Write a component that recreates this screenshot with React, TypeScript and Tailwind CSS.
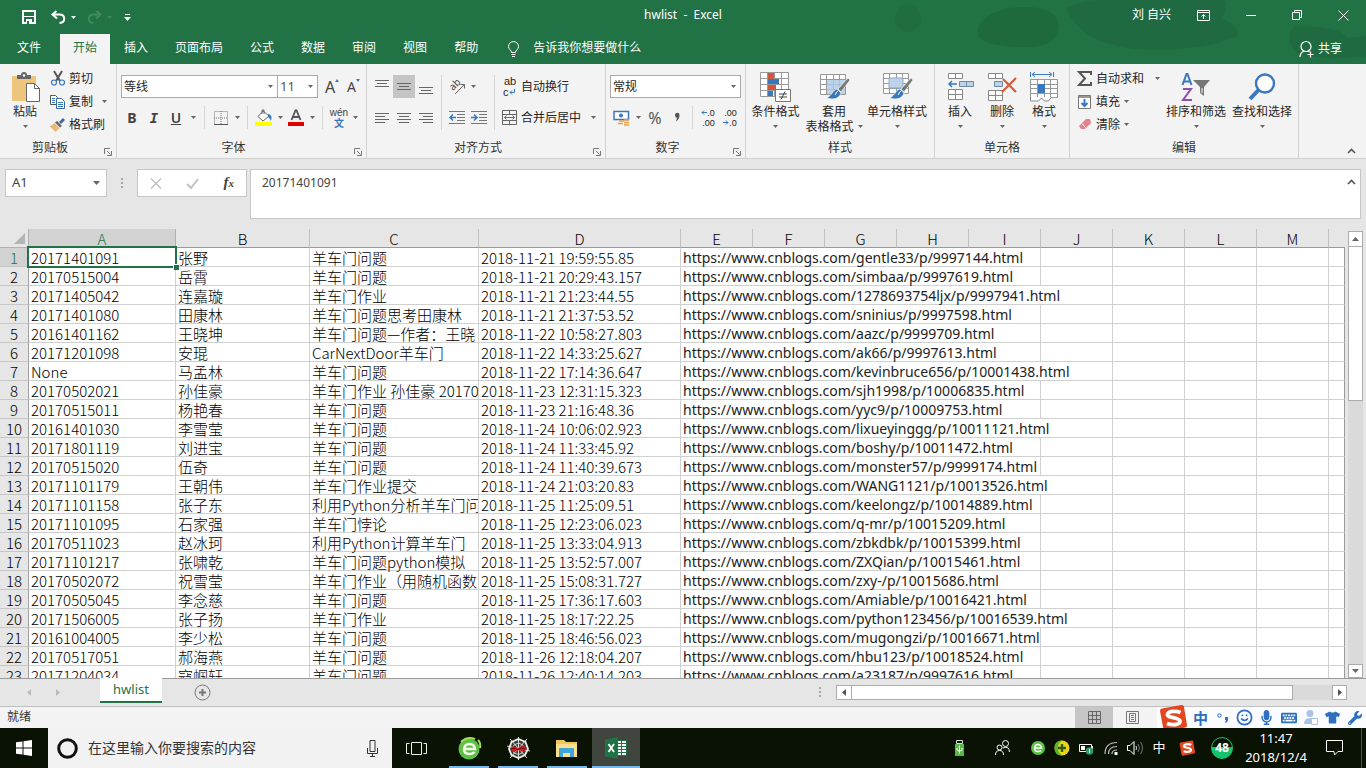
import { useState } from "react";
import type { ReactNode } from "react";
import { FaKeyboard, FaMicrophone, FaTshirt, FaWrench } from "react-icons/fa";
import { Smile } from "lucide-react";

type Row = {
  id: string;
  name: string;
  title: string;
  time: string;
  path: string;
  span: number;
};

// span = how many columns the link text runs over
const rows: Row[] = [
  { id: "20171401091", name: "张野", title: "羊车门问题", time: "2018-11-21 19:59:55.85", path: "gentle33/p/9997144", span: 5 },
  { id: "20170515004", name: "岳霄", title: "羊车门问题", time: "2018-11-21 20:29:43.157", path: "simbaa/p/9997619", span: 5 },
  { id: "20171405042", name: "连嘉璇", title: "羊车门作业", time: "2018-11-21 21:23:44.55", path: "1278693754ljx/p/9997941", span: 6 },
  { id: "20171401080", name: "田康林", title: "羊车门问题思考田康林", time: "2018-11-21 21:37:53.52", path: "sninius/p/9997598", span: 5 },
  { id: "20161401162", name: "王晓坤", title: "羊车门问题—作者：王晓", time: "2018-11-22 10:58:27.803", path: "aazc/p/9999709", span: 5 },
  { id: "20171201098", name: "安琨", title: "CarNextDoor羊车门", time: "2018-11-22 14:33:25.627", path: "ak66/p/9997613", span: 5 },
  { id: "None", name: "马孟林", title: "羊车门问题", time: "2018-11-22 17:14:36.647", path: "kevinbruce656/p/10001438", span: 6 },
  { id: "20170502021", name: "孙佳豪", title: "羊车门作业 孙佳豪 20170", time: "2018-11-23 12:31:15.323", path: "sjh1998/p/10006835", span: 5 },
  { id: "20170515011", name: "杨艳春", title: "羊车门问题", time: "2018-11-23 21:16:48.36", path: "yyc9/p/10009753", span: 5 },
  { id: "20161401030", name: "李雪莹", title: "羊车门问题", time: "2018-11-24 10:06:02.923", path: "lixueyinggg/p/10011121", span: 6 },
  { id: "20171801119", name: "刘进宝", title: "羊车门问题", time: "2018-11-24 11:33:45.92", path: "boshy/p/10011472", span: 5 },
  { id: "20170515020", name: "伍奇", title: "羊车门问题", time: "2018-11-24 11:40:39.673", path: "monster57/p/9999174", span: 5 },
  { id: "20171101179", name: "王朝伟", title: "羊车门作业提交", time: "2018-11-24 21:03:20.83", path: "WANG1121/p/10013526", span: 6 },
  { id: "20171101158", name: "张子东", title: "利用Python分析羊车门问", time: "2018-11-25 11:25:09.51", path: "keelongz/p/10014889", span: 5 },
  { id: "20171101095", name: "石家强", title: "羊车门悖论", time: "2018-11-25 12:23:06.023", path: "q-mr/p/10015209", span: 5 },
  { id: "20170511023", name: "赵冰珂", title: "利用Python计算羊车门", time: "2018-11-25 13:33:04.913", path: "zbkdbk/p/10015399", span: 5 },
  { id: "20171101217", name: "张啸乾", title: "羊车门问题python模拟", time: "2018-11-25 13:52:57.007", path: "ZXQian/p/10015461", span: 5 },
  { id: "20170502072", name: "祝雪莹", title: "羊车门作业（用随机函数", time: "2018-11-25 15:08:31.727", path: "zxy-/p/10015686", span: 5 },
  { id: "20170505045", name: "李念慈", title: "羊车门问题", time: "2018-11-25 17:36:17.603", path: "Amiable/p/10016421", span: 5 },
  { id: "20171506005", name: "张子扬", title: "羊车门作业", time: "2018-11-25 18:17:22.25", path: "python123456/p/10016539", span: 6 },
  { id: "20161004005", name: "李少松", title: "羊车门问题", time: "2018-11-25 18:46:56.023", path: "mugongzi/p/10016671", span: 5 },
  { id: "20170517051", name: "郝海燕", title: "羊车门问题", time: "2018-11-26 12:18:04.207", path: "hbu123/p/10018524", span: 5 },
  { id: "20171204034", name: "寇帼轩", title: "羊车门问题", time: "2018-11-26 12:40:14.203", path: "a23187/p/9997616", span: 5 },
];

const columns = ["A", "B", "C", "D", "E", "F", "G", "H", "I", "J", "K", "L", "M"];
const tabs = ["文件", "开始", "插入", "页面布局", "公式", "数据", "审阅", "视图", "帮助"];

function Icon({ w, h, children }: { w: number; h: number; children: ReactNode }) {
  return (
    <svg width={w} height={h} viewBox={`0 0 ${w} ${h}`} fill="none" className="shrink-0 overflow-visible" aria-hidden="true">
      {children}
    </svg>
  );
}

function Caret({ color = "#666" }: { color?: string }) {
  return (
    <Icon w={5} h={3}>
      <path d="M0 0h5L2.500 3z" fill={color} />
    </Icon>
  );
}

function Tool({ label, active, children }: { label: string; active?: boolean; children: ReactNode }) {
  return (
    <button
      aria-label={label}
      className={`flex h-[23px] w-[22px] shrink-0 items-center justify-center ${active ? "bg-[#c5c5c5]" : ""}`}
    >
      {children}
    </button>
  );
}

function Drop({ label, wide }: { label: string; wide?: boolean }) {
  return (
    <button aria-label={label} className={`flex h-[23px] shrink-0 items-center justify-center ${wide ? "w-3" : "w-[10px]"}`}>
      <Caret />
    </button>
  );
}

function Group({ label, launcher, className, children }: { label: string; launcher?: boolean; className: string; children: ReactNode }) {
  return (
    <section aria-label={label} className={`flex shrink-0 flex-col border-r border-[#d2d2d2] ${className}`}>
      <div className="flex h-[73px]">{children}</div>
      <div className="flex h-[21px] items-center text-[#333]">
        <span className="flex-1 text-center">{label}</span>
        {launcher && (
          <button aria-label={`${label}设置`} className="flex h-4 w-4 items-end justify-center">
            <Icon w={8} h={8}>
              <path d="M.5 6V.5H6M3 3l3.500 3.500M7.500 3v4.500H3" stroke="#777" />
            </Icon>
          </button>
        )}
      </div>
    </section>
  );
}

function BigButton({ icon, label, second, className }: { icon: ReactNode; label: string; second?: string; className: string }) {
  return (
    <button className={`flex shrink-0 flex-col items-center pt-2 leading-[15px] whitespace-nowrap ${className}`}>
      <span className="mb-0.5 flex h-[30px] items-center justify-center">{icon}</span>
      <span>{label}</span>
      <span className="flex h-[15px] items-center gap-1">
        {second}
        <Caret />
      </span>
    </button>
  );
}

function SmallButton({ icon, label }: { icon: ReactNode; label: string }) {
  return (
    <button className="flex h-[23px] items-center gap-1 whitespace-nowrap">
      <span className="flex w-[15px] justify-center">{icon}</span>
      {label}
    </button>
  );
}

function Divider() {
  return <div className="h-full w-px shrink-0 bg-[#d6d6d6]" />;
}

function Lines({ widths, align, top }: { widths: number[]; align: "left" | "center" | "right"; top: number }) {
  return (
    <Icon w={14} h={16}>
      {widths.map((width, i) => {
        const x = align === "left" ? 0 : align === "center" ? (14 - width) / 2 : 14 - width;
        return <rect key={i} x={x} y={top + i * 3} width={width} height={1} fill="#666" />;
      })}
    </Icon>
  );
}

function Grid({ cols, rowCount, w, h }: { cols: number; rowCount: number; w: number; h: number }) {
  const lines: string[] = [];
  for (let c = 0; c <= cols; c++) lines.push(`M${Math.round((c * w) / cols) + 0.5} .5v${h}`);
  for (let r = 0; r <= rowCount; r++) lines.push(`M.5 ${Math.round((r * h) / rowCount) + 0.5}h${w}`);
  return (
    <>
      <rect width={w} height={h} fill="#fff" />
      <path d={lines.join("")} stroke="#999" />
    </>
  );
}

function Brush() {
  return (
    <>
      <path d="M30 6 20 17l3 3 9-12z" fill="#777" stroke="#f3f3f3" strokeWidth=".7" />
      <path d="M19 17c-4 1-4 5-10 9 6 2 12 1 14-5z" fill="#3a78bd" stroke="#f3f3f3" strokeWidth=".7" />
      <path d="M20 19c-2 1-2 3-3 4" stroke="#fff" />
    </>
  );
}

function SogouMark({ size }: { size: number }) {
  return (
    <svg width={size} height={size} viewBox="0 0 28 28" fill="none" className="shrink-0" aria-hidden="true">
      <path d="M3 4.500 22.500 1q2-.3 2.400 1.600L28 21q.2 2-1.700 2.500L7 27.500q-2 .2-2.500-1.700L1 7q-.2-2 2-2.500z" fill="#e5461f" />
      <path
        d="M21.500 8.500C17 6.500 9 7 8.500 10.500c-.4 3.500 12 2.500 12.500 6.500.3 4-8 4.500-13 2.500"
        stroke="#fff"
        strokeWidth="3.800"
      />
    </svg>
  );
}

function TitleBar() {
  return (
    <header className="grid h-[30px] shrink-0 grid-cols-[1fr_auto_1fr] items-center">
      <div className="flex items-center pt-1 pl-[22px]">
        <button aria-label="保存" className="mr-[15px]">
          <Icon w={14} h={14}>
            <path d="M1 1h12v12H1z" stroke="#fff" strokeWidth="2" />
            <path d="M2 6h10v1H2zM4 9h6v4H4z" fill="#fff" />
            <path d="M5 11h2v3H5z" fill="#217346" />
          </Icon>
        </button>
        <button aria-label="撤消" className="mr-[5px]">
          <Icon w={15} h={14}>
            <path d="M5.500 1 1.500 4.500l4.500 4M2 4.500h6.500c6 0 6.500 8 0 8.500" stroke="#fff" strokeWidth="2" />
          </Icon>
        </button>
        <button aria-label="撤消列表" className="mr-[11px]">
          <Caret color="#fff" />
        </button>
        <button aria-label="恢复" className="mr-[5px]">
          <Icon w={15} h={14}>
            <path d="m9.500 1 4 3.500L9 8.500M13 4.500H6.500C.5 4.500 0 12.500 6.500 13" stroke="#43895f" strokeWidth="2" />
          </Icon>
        </button>
        <button aria-label="恢复列表" className="mr-3">
          <Caret color="#43895f" />
        </button>
        <button aria-label="自定义快速访问工具栏">
          <Icon w={7} h={7}>
            <path d="M1 0h5v1H1zM0 3h7L3.500 7z" fill="#fff" />
          </Icon>
        </button>
      </div>
      <h1 className="whitespace-pre">hwlist  -  Excel</h1>
      <div className="flex items-center justify-end">
        <span className="mr-[11px]">刘 自兴</span>
        <button aria-label="功能区显示选项" className="flex h-[30px] w-[42px] items-center justify-center">
          <Icon w={13} h={11}>
            <path d="M.5.500h12v10H.5zM.5 2.500h12M6.500 9V5M4.500 6.500l2-2 2 2" stroke="#fff" />
          </Icon>
        </button>
        <button aria-label="最小化" className="ml-1 flex h-[30px] w-[46px] items-center justify-center">
          <Icon w={10} h={10}>
            <path d="M0 5.500h10" stroke="#fff" />
          </Icon>
        </button>
        <button aria-label="还原" className="flex h-[30px] w-[46px] items-center justify-center">
          <Icon w={10} h={10}>
            <path d="M.5 2.500h7v7h-7zM2.500 2V.5h7v7H8" stroke="#fff" />
          </Icon>
        </button>
        <button aria-label="关闭" className="flex h-[30px] w-[46px] items-center justify-center">
          <Icon w={11} h={11}>
            <path d="m.5.500 10 10M10.500.5l-10 10" stroke="#fff" />
          </Icon>
        </button>
      </div>
    </header>
  );
}

function TabStrip({ tab, onTab }: { tab: string; onTab: (t: string) => void }) {
  return (
    <nav className="flex h-[30px] shrink-0 items-stretch gap-px">
      {tabs.map((t) => (
        <button
          key={t}
          onClick={() => onTab(t)}
          className={`pb-0.5 ${t === "文件" ? "pr-[18px] pl-[17px]" : "px-[13px]"} ${
            t === tab ? "bg-[#f3f3f3] text-[#217346]" : "text-white"
          }`}
        >
          {t}
        </button>
      ))}
      <label className="ml-4 flex items-center gap-[14px]">
        <Icon w={11} h={16}>
          <path d="M3.500 11.500C3.500 9 .5 8.500.5 5.500c0-6.500 10-6.500 10 0 0 3-3 3.500-3 6zM3.500 13.500h4M4 15.500h3" stroke="#fff" />
        </Icon>
        <input placeholder="告诉我你想要做什么" className="w-40 bg-transparent pb-0.5 text-white outline-none placeholder:text-white" />
      </label>
      <button className="mr-6 ml-auto flex items-center gap-1">
        <Icon w={15} h={16}>
          <circle cx="7" cy="5.500" r="5" stroke="#fff" strokeWidth="1.200" />
          <path d="M1 16c0-3 2-5 4-6M9 10l1.500 1M8.500 13.500h6M11.500 10.500v6" stroke="#fff" strokeWidth="1.200" />
        </Icon>
        共享
      </button>
    </nav>
  );
}

function Ribbon() {
  return (
    <div className="flex h-[95px] shrink-0 overflow-hidden border-b border-[#d0d0d0] bg-[#f3f3f3] text-[#262626]">
      <Group label="剪贴板" launcher className="w-[117px]">
        <BigButton
          className="w-[50px]"
          label="粘贴"
          icon={
            <Icon w={29} h={30}>
              <path d="M1 4h24v25H1z" fill="#edc57c" />
              <path d="M6 7V3h4q0-3 3-3t3 3h4v4z" fill="#666" />
              <circle cx="13" cy="3.500" r="1.200" fill="#fff" />
              <path d="M15.500 11.500h8l5 5v13h-13z" fill="#fff" stroke="#666" />
              <path d="M23.500 11.500v5h5" stroke="#666" />
            </Icon>
          }
        />
        <div className="flex flex-1 flex-col pt-[3px]">
          <SmallButton
            label="剪切"
            icon={
              <Icon w={14} h={15}>
                <path d="m3 0 6 10M11 0 5 10" stroke="#555" strokeWidth="2" />
                <circle cx="3" cy="11.500" r="2.500" stroke="#3a78bd" strokeWidth="1.200" />
                <circle cx="11" cy="11.500" r="2.500" stroke="#3a78bd" strokeWidth="1.200" />
              </Icon>
            }
          />
          <div className="flex items-center justify-between pr-[6px]">
            <SmallButton
              label="复制"
              icon={
                <Icon w={15} h={14}>
                  <path d="M.5.500h5l2 2v7h-7z" fill="#fff" stroke="#555" />
                  <path d="M2 3.500h3M2 5.500h3M2 7.500h3" stroke="#3a78bd" />
                  <path d="M6.500 3.500h5l3 3v7h-8z" fill="#fff" stroke="#3a6a9d" />
                  <path d="M8 7.500h5M8 9.500h5M8 11.500h5" stroke="#3a78bd" />
                </Icon>
              }
            />
            <Drop label="复制选项" wide />
          </div>
          <SmallButton
            label="格式刷"
            icon={
              <Icon w={15} h={14}>
                <path d="m13 0 2 2-4 4-2-2z" fill="#3a6a9d" />
                <path d="m7 3 5 5-2 1.500-5-5z" fill="#666" />
                <path d="m4.500 5 5 5-4 4L0 8.500z" fill="#e9b872" />
              </Icon>
            }
          />
        </div>
      </Group>

      <Group label="字体" launcher className="w-[250px]">
        <div className="flex flex-col gap-2 pt-[11px] pl-1">
          <div className="flex h-[23px] items-center">
            <div className="flex h-[23px] w-[157px] items-center border border-[#ababab] bg-white pr-1">
              <select aria-label="字体" className="h-full flex-1 appearance-none pl-0.5 outline-none">
                <option>等线</option>
              </select>
              <Caret />
            </div>
            <div className="-ml-px flex h-[23px] w-[41px] items-center border border-[#ababab] bg-white pr-1">
              <select aria-label="字号" className="h-full min-w-0 flex-1 appearance-none pl-0.5 text-[13px] text-[#555] outline-none">
                <option>11</option>
              </select>
              <Caret />
            </div>
            <button aria-label="增大字号" className="ml-[7px] flex w-[14px] items-start text-base leading-4 text-[#444]">
              A
              <Icon w={4} h={3}>
                <path d="M0 3h4L2 0z" fill="#3a78bd" />
              </Icon>
            </button>
            <button aria-label="减小字号" className="ml-2 flex w-[14px] items-start text-sm leading-4 text-[#444]">
              A
              <Icon w={4} h={3}>
                <path d="M0 0h4L2 3z" fill="#3a78bd" />
              </Icon>
            </button>
          </div>
          <div className="flex h-[23px] items-center text-sm text-[#444]">
            <Tool label="加粗">
              <b>B</b>
            </Tool>
            <Tool label="倾斜">
              <i className="font-['DejaVu_Sans_Mono',monospace] font-bold">I</i>
            </Tool>
            <Tool label="下划线">
              <span className="font-semibold underline">U</span>
            </Tool>
            <Drop label="下划线样式" wide />
            <div className="mx-[5px] h-full">
              <Divider />
            </div>
            <Tool label="边框">
              <Icon w={14} h={14}>
                <path d="M.5.500h13v13H.5zM7 0v13M0 7h13" stroke="#777" strokeDasharray="1 1" />
                <path d="M0 13.500h14" stroke="#555" />
              </Icon>
            </Tool>
            <Drop label="边框样式" />
            <div className="mx-[5px] h-full">
              <Divider />
            </div>
            <Tool label="填充颜色">
              <Icon w={18} h={17}>
                <path d="m8 2 6 5-6 5-5-4.500z" fill="#fff" stroke="#666" />
                <path d="M7 5V1h2v4" stroke="#666" />
                <path d="M13 5q5 1 3 7-1-3-3-4z" fill="#3a78bd" />
                <path d="M0 13h17v4H0z" fill="#ff0" />
              </Icon>
            </Tool>
            <Drop label="填充颜色列表" />
            <Tool label="字体颜色">
              <Icon w={16} h={17}>
                <path d="M3.500 11 7.500 1.500h1L12.500 11M5 8h6" stroke="#555" strokeWidth="1.800" />
                <path d="M0 13h16v4H0z" fill="#e00000" />
              </Icon>
            </Tool>
            <Drop label="字体颜色列表" />
            <div className="mx-[5px] h-full">
              <Divider />
            </div>
            <button aria-label="拼音" className="flex w-[22px] flex-col items-center text-[10px] leading-[11px]">
              <span className="font-['Liberation_Sans',sans-serif]">wén</span>
              <span className="font-bold text-[#3a78bd]">文</span>
            </button>
            <Drop label="拼音选项" />
          </div>
        </div>
      </Group>

      <Group label="对齐方式" launcher className="w-[239px]">
        <div className="flex h-[66px] gap-1 pt-[11px] pl-1">
          <div className="flex flex-col gap-2">
            <div className="flex">
              <Tool label="顶端对齐">
                <Lines widths={[14, 10, 14]} align="center" top={1} />
              </Tool>
              <Tool label="垂直居中" active>
                <Lines widths={[14, 10, 14]} align="center" top={4} />
              </Tool>
              <Tool label="底端对齐">
                <Lines widths={[14, 10, 14]} align="center" top={8} />
              </Tool>
            </div>
            <div className="flex">
              <Tool label="左对齐">
                <Lines widths={[14, 10, 14, 10]} align="left" top={3} />
              </Tool>
              <Tool label="居中">
                <Lines widths={[14, 10, 14, 10]} align="center" top={3} />
              </Tool>
              <Tool label="右对齐">
                <Lines widths={[14, 10, 14, 10]} align="right" top={3} />
              </Tool>
            </div>
          </div>
          <Divider />
          <div className="flex flex-col gap-2">
            <div className="flex">
              <Tool label="方向">
                <Icon w={18} h={17}>
                  <path d="m7 16 9-9M12.500 6.500h4v4" stroke="#666" />
                  <text fontSize="10" fill="#444" transform="translate(5 13) rotate(-45)">
                    ab
                  </text>
                </Icon>
              </Tool>
              <Drop label="方向选项" />
            </div>
            <div className="flex">
              <Tool label="减少缩进量">
                <Icon w={17} h={13}>
                  <path d="M0 .5h16M8 3.500h8M8 6.500h8M8 9.500h8M0 12.500h16" stroke="#777" />
                  <path d="M7 6.500H1M4 3.500l-3 3 3 3" stroke="#3a78bd" strokeWidth="1.500" />
                </Icon>
              </Tool>
              <Tool label="增加缩进量">
                <Icon w={17} h={13}>
                  <path d="M0 .5h16M8 3.500h8M8 6.500h8M8 9.500h8M0 12.500h16" stroke="#777" />
                  <path d="M0 6.500h6M3 3.500l3 3-3 3" stroke="#3a78bd" strokeWidth="1.500" />
                </Icon>
              </Tool>
            </div>
          </div>
          <Divider />
          <div className="flex flex-col gap-2">
            <button className="flex h-[23px] items-center gap-1 pl-1">
              <span className="flex w-[14px] flex-col font-['Liberation_Sans',sans-serif] text-[11px] leading-[11px]">
                <span>ab</span>
                <span className="flex items-center">
                  c
                  <Icon w={6} h={6}>
                    <path d="M5.500 0v3.500H1M3 1.500l-2 2 2 2" stroke="#3a78bd" />
                  </Icon>
                </span>
              </span>
              自动换行
            </button>
            <div className="flex items-center">
              <button className="flex h-[23px] items-center gap-1 pl-[3px]">
                <Icon w={15} h={15}>
                  <path d="M.5.500h14v14H.5zM.5 4.500h14M.5 10.500h14M7.500 0v4M7.500 11v4" stroke="#666" />
                  <path d="M2 7.500h11M4.500 5.500l-2 2 2 2M10.500 5.500l2 2-2 2" stroke="#3a78bd" />
                </Icon>
                合并后居中
              </button>
              <span className="ml-1.5">
                <Drop label="合并选项" wide />
              </span>
            </div>
          </div>
        </div>
      </Group>

      <Group label="数字" launcher className="w-[140px]">
        <div className="flex flex-col gap-2 pt-[11px] pl-1">
          <div className="flex h-[23px] w-[131px] items-center border border-[#ababab] bg-white pr-1">
            <select aria-label="数字格式" className="h-full flex-1 appearance-none pl-0.5 outline-none">
              <option>常规</option>
            </select>
            <Caret />
          </div>
          <div className="flex h-[23px] items-center">
            <Tool label="会计数字格式">
              <Icon w={17} h={16}>
                <path d="M1 1.500h14.500v8H1z" fill="#fff" stroke="#3a78bd" strokeWidth="1.500" />
                <circle cx="8" cy="5.500" r="2" fill="#3a78bd" />
                <path d="M6 11h5M5 13.500h5M11 10h5M11 12.500h5M11 15h5" stroke="#eaa04a" strokeWidth="1.600" />
              </Icon>
            </Tool>
            <Drop label="会计格式列表" wide />
            <Tool label="百分比样式">
              <span className="text-base text-[#555]">%</span>
            </Tool>
            <Tool label="千位分隔样式">
              <Icon w={5} h={9}>
                <path d="M0 2a2.200 2.200 0 0 1 4.500 0q0 4-3.500 6.500.500-2 1-3.500Q0 4.500 0 2z" fill="#555" />
              </Icon>
            </Tool>
            <div className="mx-1 h-full">
              <Divider />
            </div>
            <Tool label="增加小数位数">
              <span className="flex flex-col items-end font-['Liberation_Sans',sans-serif] text-[9px] leading-[10px]">
                <span className="flex items-center">
                  <Icon w={6} h={5}>
                    <path d="M6 2.500H1M3 .5l-2 2 2 2" stroke="#3a78bd" />
                  </Icon>
                  .0
                </span>
                <span>.00</span>
              </span>
            </Tool>
            <Tool label="减少小数位数">
              <span className="flex flex-col items-end font-['Liberation_Sans',sans-serif] text-[9px] leading-[10px]">
                <span>.00</span>
                <span className="flex items-center">
                  <Icon w={6} h={5}>
                    <path d="M0 2.500h5M3 .5l2 2-2 2" stroke="#3a78bd" />
                  </Icon>
                  .0
                </span>
              </span>
            </Tool>
          </div>
        </div>
      </Group>

      <Group label="样式" className="w-[189px]">
        <BigButton
          className="w-[59px]"
          label="条件格式"
          icon={
            <Icon w={31} h={30}>
              <Grid cols={4} rowCount={4} w={28} h={24} />
              <path d="M8 1h6v6H8zM8 13h8v5H8z" fill="#d0573c" />
              <path d="M8 7h11v5H8zM8 19h5v5H8z" fill="#3a78bd" />
              <path d="M15.500 17.500h15v12h-15z" fill="#fff" stroke="#777" />
              <path d="M19 22h8M19 25h8M25 19.500l-4 8" stroke="#444" />
            </Icon>
          }
        />
        <BigButton
          className="w-[58px]"
          label="套用"
          second="表格格式"
          icon={
            <Icon w={33} h={30}>
              <g transform="translate(2 2)">
                <Grid cols={4} rowCount={4} w={25} h={20} />
                <path d="M7 6h18v14H7z" fill="#bcd3ea" />
                <path d="M13.500 6v14M19.500 6v14M7 10.500h18M7 15.500h18" stroke="#a9c0da" />
              </g>
              <Brush />
            </Icon>
          }
        />
        <BigButton
          className="w-[68px]"
          label="单元格样式"
          icon={
            <Icon w={33} h={30}>
              <g transform="translate(2 1)">
                <Grid cols={4} rowCount={4} w={25} h={20} />
                <path d="M6 5h14v10H6z" fill="#bcd3ea" stroke="#8fa9c6" />
              </g>
              <Brush />
            </Icon>
          }
        />
      </Group>

      <Group label="单元格" className="w-[135px]">
        <BigButton
          className="ml-1 w-[42px]"
          label="插入"
          icon={
            <Icon w={27} h={28}>
              <path d="M1.500.500h14v5h-14zM8.500.500v5M1.500 16.500h14v10h-14zM8.500 16.500v10M1.500 21.500h14" fill="#fff" stroke="#888" />
              <path d="M12.500 8.500h14v5h-14zM19.500 8.500v5" fill="#bcd3ea" stroke="#6e87a5" />
              <path d="M10 11H2M5 8l-3 3 3 3" stroke="#3a78bd" strokeWidth="1.500" />
            </Icon>
          }
        />
        <BigButton
          className="w-[42px]"
          label="删除"
          icon={
            <Icon w={29} h={28}>
              <path d="M.5.500h14v5H.5zM7.500.500v5M.5 17.500h14v10H.5zM7.500 17.500v10M.5 22.500h14" fill="#fff" stroke="#888" />
              <path d="M6.500 8.500h8v5h-8z" fill="#bcd3ea" stroke="#6e87a5" />
              <path d="m15 6 13 13M28 5 14 19" stroke="#da5a38" strokeWidth="2.200" />
            </Icon>
          }
        />
        <BigButton
          className="w-[42px]"
          label="格式"
          icon={
            <Icon w={28} h={30}>
              <path d="M.5 0v5M23.500 0v5M2 2.500h20M5 0 2 2.500 5 5M19 0l3 2.500L19 5" stroke="#3a78bd" />
              <g transform="translate(0 7)">
                <Grid cols={4} rowCount={4} w={27} h={18} />
                <path d="M8 5h7v9H8z" fill="#3a78bd" />
              </g>
              <path d="M.5 25v4h8l3-3 3 3h4l3-4" fill="#fff" stroke="#888" />
            </Icon>
          }
        />
      </Group>

      <Group label="编辑" className="w-[229px]">
        <div className="flex w-[93px] flex-col pt-[3px] pl-[7px]">
          <div className="flex items-center justify-between">
            <SmallButton
              label="自动求和"
              icon={
                <Icon w={15} h={15}>
                  <path d="M14 4V1H2l6 6.500L2 14h12v-3" stroke="#555" strokeWidth="2" />
                </Icon>
              }
            />
            <Drop label="求和选项" wide />
          </div>
          <div className="flex items-center">
            <SmallButton
              label="填充"
              icon={
                <Icon w={13} h={14}>
                  <path d="M.5.500h12v13H.5z" fill="#fff" stroke="#777" />
                  <path d="M1 1h11v2H1z" fill="#999" />
                  <path d="M6.500 4v7M3.500 8l3 3 3-3" stroke="#3a78bd" strokeWidth="2" />
                </Icon>
              }
            />
            <Drop label="填充选项" wide />
          </div>
          <div className="flex items-center">
            <SmallButton
              label="清除"
              icon={
                <Icon w={14} h={12}>
                  <path d="M8 0h4l1 4-6 6H3L1 7z" fill="#e67f8e" />
                  <path d="m4 4.500 3.500 4" stroke="#fff" />
                </Icon>
              }
            />
            <Drop label="清除选项" wide />
          </div>
        </div>
        <BigButton
          className="w-[66px]"
          label="排序和筛选"
          icon={
            <Icon w={30} h={29}>
              <path d="m1.500 12 4-11h1l4 11M3 8.500h6" stroke="#3a78bd" strokeWidth="2" />
              <path d="M2 16h8L2 27h9" stroke="#8e4fa8" strokeWidth="2" />
              <path d="M12 7h17l-6 7v9l-4-3v-6z" fill="#777" />
              <path d="M21 15v5" stroke="#fff" />
            </Icon>
          }
        />
        <BigButton
          className="w-[66px]"
          label="查找和选择"
          icon={
            <Icon w={28} h={28}>
              <circle cx="17" cy="10.500" r="9" fill="#fff" stroke="#3a78bd" strokeWidth="2.400" />
              <path d="M10.500 17 2 26" stroke="#3a78bd" strokeWidth="4" />
            </Icon>
          }
        />
      </Group>

      <button aria-label="折叠功能区" className="mt-auto mr-2.5 mb-1 ml-auto">
        <Icon w={9} h={6}>
          <path d="m1 5 3.500-3.500L8 5" stroke="#555" strokeWidth="1.600" />
        </Icon>
      </button>
    </div>
  );
}

function FormulaBar({ value, onChange }: { value: string; onChange: (v: string) => void }) {
  return (
    <div className="flex shrink-0 items-start px-[5px] py-[10px] text-[13px] text-[#444]">
      <div className="flex h-[28px] w-[102px] items-center border border-[#c6c6c6] bg-white px-1.5">
        <input aria-label="名称框" defaultValue="A1" className="min-w-0 flex-1 outline-none" />
        <Icon w={7} h={4}>
          <path d="M0 0h7L3.500 4z" fill="#666" />
        </Icon>
      </div>
      <div className="flex h-[28px] w-[30px] items-center justify-center">
        <Icon w={2} h={11}>
          <path d="M0 0h2v2H0zM0 4h2v2H0zM0 8h2v2H0z" fill="#a6a6a6" />
        </Icon>
      </div>
      <div className="flex h-[28px] w-[110px] items-center justify-around border border-[#c6c6c6] bg-white">
        <button aria-label="取消">
          <Icon w={12} h={11}>
            <path d="m1 .5 10 10M11 .5l-10 10" stroke="#c0c0c0" strokeWidth="1.500" />
          </Icon>
        </button>
        <button aria-label="输入">
          <Icon w={13} h={11}>
            <path d="m1 6 4 4 7-9" stroke="#c0c0c0" strokeWidth="2" />
          </Icon>
        </button>
        <button aria-label="插入函数" className="font-['Liberation_Serif',serif] text-[15px] font-bold italic">
          f<span className="text-[11px]">x</span>
        </button>
      </div>
      <div className="ml-[3px] flex h-[50px] flex-1 items-start border border-[#c6c6c6] bg-white">
        <textarea
          aria-label="编辑栏"
          value={value}
          onChange={(e) => onChange(e.target.value)}
          className="h-full flex-1 resize-none pt-1 pl-[11px] text-xs leading-[18px] outline-none"
        />
        <button aria-label="折叠编辑栏" className="p-1 pt-[9px]">
          <Icon w={9} h={6}>
            <path d="m1 5 3.500-3.500L8 5" stroke="#555" strokeWidth="1.600" />
          </Icon>
        </button>
      </div>
    </div>
  );
}

function Sheet() {
  const cell = "h-[19px] border-r border-b border-[#d0d0d0] bg-white p-0 pt-0.5 pl-0.5 leading-4 whitespace-nowrap";
  return (
    <div className="flex min-h-0 flex-1 overflow-hidden">
      <div className="min-w-0 flex-1 overflow-hidden">
        <table className="w-full table-fixed border-separate border-spacing-0 font-['Noto_Sans_CJK_SC',sans-serif] text-[15px] font-light text-black">
          <colgroup>
            <col className="w-[29px]" />
            <col className="w-[147px]" />
            <col className="w-[134px]" />
            <col className="w-[169px]" />
            <col className="w-[202px]" />
            {columns.slice(4).map((c) => (
              <col key={c} className="w-[72px]" />
            ))}
            <col />
          </colgroup>
          <thead>
            <tr>
              <th aria-label="全选" className="h-[19px] border-r border-b border-[#b0b0b0] p-0">
                <span className="flex justify-end pr-[3px]">
                  <Icon w={11} h={11}>
                    <path d="M11 0v11H0z" fill="#b4b4b4" />
                  </Icon>
                </span>
              </th>
              {columns.map((c) => (
                <th
                  key={c}
                  scope="col"
                  className={`h-[19px] border-r border-b p-0 pt-0.5 leading-4 font-light ${
                    c === "A"
                      ? "border-r-[#b0b0b0] border-b-[#217346] bg-[#d2d2d2] text-[#217346]"
                      : "border-r-[#c0c0c0] border-b-[#9b9b9b] text-black"
                  }`}
                >
                  {c}
                </th>
              ))}
              <th aria-hidden="true" className="border-b border-[#9b9b9b] p-0" />
            </tr>
          </thead>
          <tbody>
            {rows.map((row, i) => (
              <tr key={row.id}>
                <th
                  scope="row"
                  className={`h-[19px] border-r border-b border-r-[#a0a0a0] border-b-[#c6c6c6] p-0 pt-0.5 leading-4 font-light ${
                    i === 0 ? "bg-[#d2d2d2] text-[#217346]" : ""
                  }`}
                >
                  {i + 1}
                </th>
                <td className={`${cell} ${i === 0 ? "relative" : ""}`}>
                  {row.id}
                  {i === 0 && (
                    <span className="pointer-events-none absolute -inset-[2px] border-2 border-[#217346]">
                      <span className="absolute -right-[4px] -bottom-[4px] h-[6px] w-[6px] border-t border-l border-white bg-[#217346]" />
                    </span>
                  )}
                </td>
                <td className={cell}>{row.name}</td>
                <td className={`overflow-x-clip ${cell}`}>{row.title}</td>
                <td className={cell}>{row.time}</td>
                <td colSpan={row.span} className={`font-['Noto_Sans',sans-serif] text-[14px] font-normal text-[#222] ${cell}`}>
                  https://www.cnblogs.com/{row.path}.html
                </td>
                {columns.slice(4 + row.span).map((c) => (
                  <td key={c} className={cell} />
                ))}
                <td className="border-r border-b border-r-[#9b9b9b] border-b-[#d0d0d0] bg-white p-0" />
              </tr>
            ))}
          </tbody>
        </table>
      </div>
      <div className="flex w-[21px] shrink-0 flex-col items-center bg-[#e6e6e6] pt-0.5">
        <button aria-label="向上滚动" className="flex h-4 w-[15px] items-center justify-center border border-[#ababab] bg-white">
          <Icon w={7} h={4}>
            <path d="M0 4h7L3.500 0z" fill="#666" />
          </Icon>
        </button>
        <div className="flex w-[15px] flex-1 bg-[#dadada]">
          <div className="-mt-px h-[155px] w-full border border-[#ababab] bg-white" />
        </div>
        <button aria-label="向下滚动" className="flex h-[14px] w-[15px] items-center justify-center border border-[#ababab] bg-white">
          <Icon w={7} h={4}>
            <path d="M0 0h7L3.500 4z" fill="#666" />
          </Icon>
        </button>
      </div>
    </div>
  );
}

function SheetTabs() {
  return (
    <div className="flex h-[28px] shrink-0 items-start border-t border-[#9b9b9b] bg-[#e6e6e6]">
      <div className="flex h-[26px] w-[100px] items-center gap-[25px] pl-[27px]">
        <button aria-label="上一张工作表">
          <Icon w={4} h={7}>
            <path d="M4 0v7L0 3.500z" fill="#bbb" />
          </Icon>
        </button>
        <button aria-label="下一张工作表">
          <Icon w={4} h={7}>
            <path d="M0 0v7l4-3.500z" fill="#bbb" />
          </Icon>
        </button>
      </div>
      <button className="-mt-px h-[25px] w-[62px] border-b-2 border-[#217346] bg-white text-[13px] text-[#217346]">hwlist</button>
      <button aria-label="新工作表" className="ml-8 flex h-[26px] items-center">
        <Icon w={17} h={17}>
          <circle cx="8.500" cy="8.500" r="7.500" stroke="#777" />
          <path d="M8.500 5v7M5 8.500h7" stroke="#777" strokeWidth="2" />
        </Icon>
      </button>
      <div className="ml-auto flex h-[27px] w-[547px] items-center pr-[19px]">
        <Icon w={17} h={11}>
          <path d="M0 0h2v2H0zM0 4h2v2H0zM0 8h2v2H0z" fill="#a6a6a6" />
        </Icon>
        <button aria-label="向左滚动" className="flex h-[15px] w-4 items-center justify-center border border-[#ababab] bg-white">
          <Icon w={4} h={7}>
            <path d="M4 0v7L0 3.500z" fill="#555" />
          </Icon>
        </button>
        <div className="flex h-[15px] flex-1 bg-[#dadada]">
          <div className="-ml-px w-[442px] border border-[#ababab] bg-white" />
        </div>
        <button aria-label="向右滚动" className="flex h-[15px] w-[15px] items-center justify-center border border-[#ababab] bg-white">
          <Icon w={4} h={7}>
            <path d="M0 0v7l4-3.500z" fill="#555" />
          </Icon>
        </button>
      </div>
    </div>
  );
}

function StatusBar() {
  return (
    <div className="flex h-[22px] shrink-0 items-stretch border-t border-[#c0c0c0] bg-[#f3f3f3] text-[#333]">
      <span className="pl-[7px] leading-5">就绪</span>
      <button aria-label="普通视图" className="ml-auto flex w-[38px] items-center justify-center bg-[#c6c6c6]">
        <Icon w={13} h={13}>
          <path d="M.5.500h12v12H.5zM4.500 0v13M8.500 0v13M0 4.500h13M0 8.500h13" stroke="#666" />
        </Icon>
      </button>
      <button aria-label="页面布局视图" className="flex w-[38px] items-center justify-center">
        <Icon w={13} h={13}>
          <path d="M.5.500h12v12H.5zM3.500 2.500h6v8h-6zM5 4.500h3M5 6.500h3M5 8.500h3" stroke="#777" />
        </Icon>
      </button>
      <div className="ml-1.5 flex w-[209px] items-center bg-[#fafcff] text-[#2f6fc0]">
        <div className="-my-1 flex w-[33px] shrink-0 justify-center pr-0.5">
          <SogouMark size={28} />
        </div>
        <button className="w-[21px] text-[15px] leading-5 font-bold">中</button>
        <button aria-label="标点" className="flex w-[22px] justify-center">
          <Icon w={11} h={10}>
            <circle cx="2.500" cy="2.500" r="1.700" stroke="#2f6fc0" />
            <path d="M8 4h3v3q0 2-2.500 3l-.5-1q1-.5 1-2H8z" fill="#2f6fc0" />
          </Icon>
        </button>
        <button aria-label="表情" className="flex w-[23px] justify-center">
          <Smile size={17} strokeWidth={2.5} />
        </button>
        <button aria-label="语音" className="flex w-[21px] justify-center">
          <FaMicrophone size={15} />
        </button>
        <button aria-label="键盘" className="flex w-[23px] justify-center">
          <FaKeyboard size={16} />
        </button>
        <button aria-label="用户" className="flex w-[22px] justify-center">
          <Icon w={14} h={15}>
            <circle cx="6" cy="3.500" r="3.500" fill="#a9c3e6" />
            <path d="M0 14q0-6 6-6 5 0 6 6z" fill="#a9c3e6" />
            <path d="M7.500 8.500h6v6h-6z" fill="#fff" stroke="#a9c3e6" />
          </Icon>
        </button>
        <button aria-label="皮肤" className="flex w-[21px] justify-center">
          <FaTshirt size={15} />
        </button>
        <button aria-label="设置" className="flex w-[23px] justify-center">
          <FaWrench size={14} />
        </button>
      </div>
    </div>
  );
}

function TaskbarApp({ label, active, children }: { label: string; active?: boolean; children: ReactNode }) {
  return (
    <button
      aria-label={label}
      className={`flex h-full w-12 shrink-0 flex-col items-center ${active ? "bg-[#41453f]" : ""}`}
    >
      <span className="flex flex-1 items-center pt-0.5">{children}</span>
      <span className={`h-0.5 bg-[#76b9ed] ${active ? "w-full" : "w-10"}`} />
    </button>
  );
}

function Taskbar() {
  return (
    <footer className="flex h-10 shrink-0 items-center overflow-hidden bg-[#0a1204] text-white">
      <button aria-label="开始菜单" className="flex w-12 shrink-0 justify-center">
        <Icon w={16} h={16}>
          <path d="m0 2.300 6.500-.9v6.100H0zM7.500 1.200 16 0v7.500H7.500zM0 8.500h6.500v6.100L0 13.700zM7.500 8.500H16V16l-8.500-1.200z" fill="#fff" />
        </Icon>
      </button>
      <label className="flex h-full w-[344px] shrink-0 items-center bg-[#f2f2f2] pr-[14px] pl-[9px] text-sm text-[#333]">
        <Icon w={21} h={21}>
          <circle cx="10.500" cy="10.500" r="8.800" stroke="#111" strokeWidth="3" />
        </Icon>
        <input placeholder="在这里输入你要搜索的内容" className="ml-[10px] min-w-0 flex-1 outline-none placeholder:text-[#333]" />
        <Icon w={11} h={17}>
          <path d="M3 .5h5v11H3zM.5 8v5.500h10V8M5.500 13.500v3M3 16.500h5" stroke="#333" />
        </Icon>
      </label>
      <button aria-label="任务视图" className="mr-[5px] flex w-12 shrink-0 justify-center">
        <Icon w={21} h={15}>
          <path d="M5.500 1.500h10v12h-10zM3.500 2.500h-3v10h3M17.500 2.500h3v10h-3" stroke="#eee" />
        </Icon>
      </button>
      <div className="flex h-full gap-px">
        <TaskbarApp label="浏览器">
          <Icon w={23} h={23}>
            <circle cx="11" cy="12" r="10.500" fill="#5fc043" />
            <path d="M20 3q3 3 2 8M3 5Q9-1 17 2" stroke="#a3dc5c" strokeWidth="2" />
            <path d="M6 12h11q-.5-5-5.500-5T6 12q0 5 5.500 5 3.500 0 5-2" stroke="#f4ffe9" strokeWidth="2.400" />
          </Icon>
        </TaskbarApp>
        <TaskbarApp label="Spyder">
          <Icon w={23} h={23}>
            <circle cx="11.500" cy="11.500" r="9" fill="#c9c9c9" fillOpacity=".25" />
            <path d="M11.500 0v23M0 9l23 5M3 2l17 19M20 2 3 21" stroke="#ddd" />
            <path d="m11.500 2 7 3 2.500 7-3 6-6.500 3-7-3-2.500-6 2.500-7z" stroke="#eee" strokeWidth="1.800" />
            <path d="m11.500 6 4.500 2 1 4-2 4-3.500 1.500L7 16l-1.500-4L7 8z" stroke="#ccc" />
            <path d="m3 12 3-3 5 2 5-3 4 4-4 3-4-2-6 2z" fill="#d3171e" />
            <path d="m4 12 4-1 2 2 4-2 4 1" stroke="#5a1013" />
          </Icon>
        </TaskbarApp>
        <TaskbarApp label="文件资源管理器">
          <Icon w={22} h={20}>
            <path d="M0 2h8l2 2h11v15H0z" fill="#f0c75e" />
            <path d="M0 6h21v13H0z" fill="#fbe08c" />
            <path d="M3 19v-8q0-1 1-1h13q1 0 1 1v8h-4v-4H7v4z" fill="#3fa5dd" />
          </Icon>
        </TaskbarApp>
        <TaskbarApp label="Excel" active>
          <Icon w={22} h={22}>
            <path d="M12 3.500h9.500v15H12z" fill="#fff" stroke="#1f7244" />
            <path d="M13 6.500h8M13 9.500h8M13 12.500h8M13 15.500h8M16.500 4v14" stroke="#1f7244" />
            <path d="M0 2.500 13 0v22L0 19.500z" fill="#1f7244" />
            <path d="m3.500 7 5.500 8M9 7l-5.500 8" stroke="#fff" strokeWidth="1.800" />
          </Icon>
        </TaskbarApp>
      </div>

      <div className="ml-auto flex h-full shrink-0 items-center text-[13px]">
        <span className="mr-[19px] flex w-6 justify-center">
          <Icon w={9} h={16}>
            <path d="M1.500.500h6v3h-6z" stroke="#ddd" />
            <path d="M0 4h9v12H0z" fill="#57b947" />
            <path d="M4.500 5.500v8M2 8v2l2.500 1.500L7 10V8" stroke="#fff" />
          </Icon>
        </span>
        <button aria-label="人脉" className="mr-3 flex w-6 justify-center">
          <Icon w={15} h={16}>
            <circle cx="10.500" cy="3.500" r="3" stroke="#fff" />
            <circle cx="4.500" cy="7.500" r="2.500" stroke="#fff" />
            <path d="M.5 15q0-4.500 4-4.500t4 4.500M8 8q6-2.500 6.500 4" stroke="#fff" />
          </Icon>
        </button>
        <span className="flex w-6 justify-center">
          <Icon w={14} h={14}>
            <circle cx="7" cy="7" r="7" fill="#5cc444" />
            <path d="M3.500 7h7q-.5-3.500-3.500-3.500T3.500 7q0 3.500 3.500 3.500 2 0 3-1" stroke="#fff" strokeWidth="1.500" />
          </Icon>
        </span>
        <span className="flex w-6 justify-center">
          <Icon w={16} h={16}>
            <circle cx="8" cy="8" r="7.500" fill="#e9d51c" />
            <path d="M.5 8q0 7.500 7.500 7.500Q4 13 4 8T8 .5Q.5.500.5 8z" fill="#5bb531" />
            <path d="M8 4v8M4 8h8" stroke="#2d5d10" strokeWidth="2.400" />
          </Icon>
        </span>
        <span className="flex w-6 justify-center">
          <Icon w={15} h={13}>
            <path d="M.5 2.500h12v7H.5z" stroke="#fff" />
            <path d="M2 4h4v4H2zM13 4h1v3h-1z" fill="#fff" />
            <circle cx="10.500" cy="9" r="3.800" fill="#2f9e63" />
            <path d="M10.500 7v4" stroke="#fff" />
          </Icon>
        </span>
        <span className="flex w-[25px] justify-center">
          <Icon w={14} h={14}>
            <path d="M1 13Q1 1.500 13 1.500M4.500 13q0-7.500 8.500-7.500M8 13q0-4 5-4" stroke="#bbb" strokeWidth="1.200" />
            <path d="M10.500 11h3v3h-3z" fill="#fff" />
          </Icon>
        </span>
        <span className="flex w-6 justify-center">
          <Icon w={17} h={14}>
            <path d="M.5 4.500H3l4-4v13l-4-4H.5z" stroke="#fff" />
            <path d="M9 5q1 2 0 4" stroke="#ddd" />
            <path d="M11 3q3 4 0 8M13.500 1q4 6 0 12" stroke="#777" />
          </Icon>
        </span>
        <button className="w-6 text-center">中</button>
        <span className="mr-3 ml-1 flex w-6 justify-center">
          <SogouMark size={16} />
        </span>
        <span className="flex h-[22px] w-[22px] items-center justify-center rounded-full border border-[#14c46c] bg-linear-to-b from-[#0a1204] from-45% to-[#14c46c] to-45% text-xs font-bold">
          48
        </span>
        <div className="ml-2 flex w-[70px] flex-col text-center leading-[19px]">
          <span>11:47</span>
          <span>2018/12/4</span>
        </div>
        <button aria-label="操作中心" className="mr-3 ml-2 flex w-[30px] justify-center">
          <Icon w={17} h={16}>
            <path d="M.5.500h16v11H12L8.500 15 8 11.500H.5z" stroke="#fff" />
          </Icon>
        </button>
        <button aria-label="显示桌面" className="h-full w-[5px] border-l border-[#4d524a]" />
      </div>
    </footer>
  );
}

export default function App() {
  const [tab, setTab] = useState("开始");
  const [formula, setFormula] = useState("20171401091");

  return (
    <div className="flex h-screen flex-col overflow-hidden bg-[#e6e6e6] font-['Noto_Sans','Noto_Sans_CJK_SC',sans-serif] text-xs">
      <div className="relative flex h-16 shrink-0 flex-col justify-between overflow-hidden bg-[#217346] text-white">
        <svg className="absolute top-0 right-0" width="480" height="64" viewBox="0 0 480 64" fill="#1f683e" aria-hidden="true">
          <ellipse cx="22" cy="18" rx="13" ry="14" opacity=".5" />
          <path d="M95 22q15-16 48-15 27 2 30 17 0 24-34 23-60 0-44-25z" opacity=".9" />
          <path d="M180 8q20-10 48-8h110q5 2-2 18 20 10 15 18-30 14-85 14-70-2-86-42z" opacity=".8" />
          <path d="M404 36q0-12 14-10 40 2 42 12l20-2v20q-50 6-64-3-14-2-12-17z" opacity=".8" />
        </svg>
        <div className="relative flex flex-1 flex-col justify-between">
          <TitleBar />
          <TabStrip tab={tab} onTab={setTab} />
        </div>
      </div>
      <Ribbon />
      <FormulaBar value={formula} onChange={setFormula} />
      <Sheet />
      <SheetTabs />
      <StatusBar />
      <Taskbar />
    </div>
  );
}
